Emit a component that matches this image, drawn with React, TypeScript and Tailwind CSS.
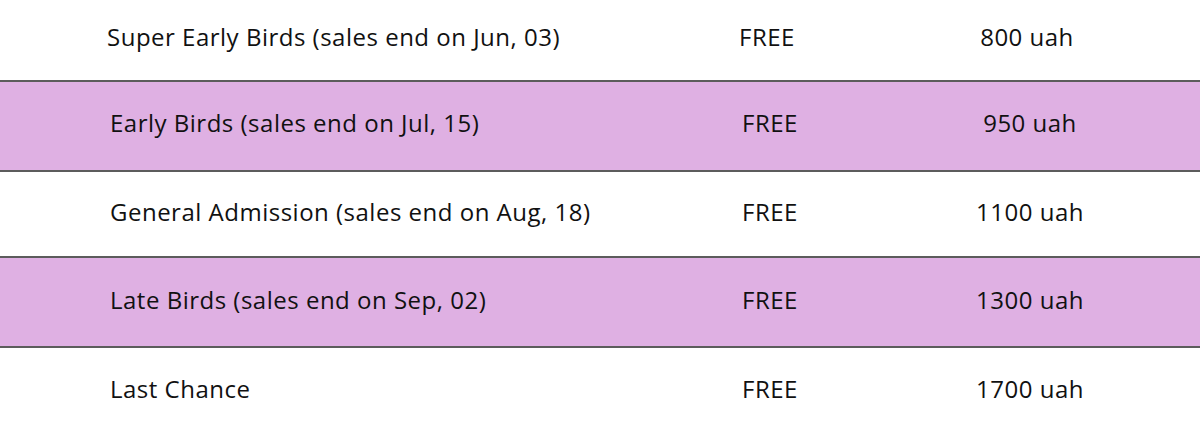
const rows = [
  { name: 'Super Early Birds (sales end on Jun, 03)', price: '800 uah', h: 'h-[82px] pb-[6px]', bg: 'bg-white', shift: 'pl-[107px]' },
  { name: 'Early Birds (sales end on Jul, 15)', price: '950 uah', h: 'h-[90px] pb-[7px]', bg: 'bg-[#dfb0e3]', shift: 'pl-[110px]' },
  { name: 'General Admission (sales end on Aug, 18)', price: '1100 uah', h: 'h-[86px] pb-[5px]', bg: 'bg-white', shift: 'pl-[110px]' },
  { name: 'Late Birds (sales end on Sep, 02)', price: '1300 uah', h: 'h-[90px] pb-[5px]', bg: 'bg-[#dfb0e3]', shift: 'pl-[110px]' },
  { name: 'Last Chance', price: '1700 uah', h: 'h-[84px] pb-[2px]', bg: 'bg-white', shift: 'pl-[110px]' },
];

export default function App() {
  return (
    <div className="w-[1200px] h-[446px] overflow-hidden bg-white text-[#111] font-['Open_Sans',sans-serif] text-[24px] tracking-[0.5px]">
      {rows.map((r, i) => (
        <div
          key={r.name}
          className={`${r.h} ${r.bg} ${r.shift} grid grid-cols-[530px_260px_260px] items-center ${i < rows.length - 1 ? 'border-b-2 border-[#5c5c5c]' : ''}`}
        >
          <span>{r.name}</span>
          <span className="text-center">FREE</span>
          <span className="text-center">{r.price}</span>
        </div>
      ))}
    </div>
  );
}
